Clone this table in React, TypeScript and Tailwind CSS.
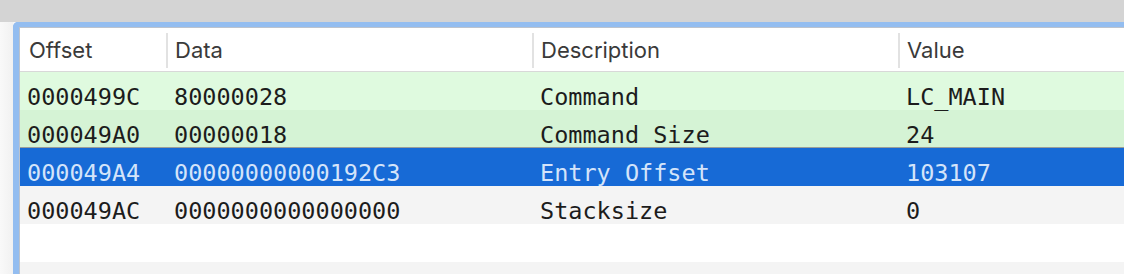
import React from "react";

type Row = { off: string; data: string; desc: string; val: string; bg: string; text: string; extra?: string };

const rows: Row[] = [
  { off: "0000499C", data: "80000028", desc: "Command", val: "LC_MAIN", bg: "bg-[#dffadf]", text: "text-[#1c1c1c]" },
  { off: "000049A0", data: "00000018", desc: "Command Size", val: "24", bg: "bg-[#d5f3d5]", text: "text-[#1c1c1c]", extra: "border-b border-[#9a9e9a]" },
  { off: "000049A4", data: "00000000000192C3", desc: "Entry Offset", val: "103107", bg: "bg-[#176ad6]", text: "text-[#d4e4fa]" },
  { off: "000049AC", data: "0000000000000000", desc: "Stacksize", val: "0", bg: "bg-[#f4f4f4]", text: "text-[#1c1c1c]" },
  { off: "", data: "", desc: "", val: "", bg: "bg-white", text: "text-[#1c1c1c]" },
  { off: "", data: "", desc: "", val: "", bg: "bg-[#f4f4f4]", text: "text-[#1c1c1c]" },
];

const grid = "grid grid-cols-[146px_366px_366px_1fr]";

function HeaderCell({ label, sep }: { label: string; sep: boolean }) {
  return (
    <div className="flex items-center h-full">
      {sep ? <div className="w-[2px] h-[35px] bg-[#e2e2e2] mt-[2px]" /> : null}
      <span className={sep ? "ml-[7px] pt-[2px]" : "ml-[9px] pt-[2px]"}>{label}</span>
    </div>
  );
}

export default function App() {
  return (
    <div className="w-[1124px] h-[274px] overflow-hidden bg-[#f6f6f6] flex flex-col">
      <div className="h-[22px] bg-[#d4d4d4] shrink-0" />
      <div className="flex flex-1 min-h-0">
        <div className="w-[13px] shrink-0 bg-gradient-to-r from-[#f9f9f9] to-[#f1f1f1]" />
        <div className="flex-1 min-w-0 border-l-[6px] border-t-[5px] border-[#93bdf0] rounded-tl-[5px] overflow-hidden">
          <div className="h-full border-l border-t border-[#bcc3cd] bg-white">
            <div
              className={`${grid} h-[44px] border-b border-[#d8d8d8] bg-white text-[22px] text-[#3a3a3a]`}
              style={{ fontFamily: "Inter, 'Noto Sans', sans-serif" }}
            >
              <HeaderCell label="Offset" sep={false} />
              <HeaderCell label="Data" sep={true} />
              <HeaderCell label="Description" sep={true} />
              <HeaderCell label="Value" sep={true} />
            </div>
            {rows.map((r, i) => (
              <div
                key={i}
                className={`${grid} h-[38px] ${r.bg} ${r.text} ${r.extra ?? ""} text-[23.5px] leading-[26px] whitespace-nowrap`}
                style={{ fontFamily: "'DejaVu Sans Mono', 'Liberation Mono', monospace" }}
              >
                <div className="pl-[7px] pt-[12px]">{r.off}</div>
                <div className="pl-[8px] pt-[12px]">{r.data}</div>
                <div className="pl-[8px] pt-[12px]">{r.desc}</div>
                <div className="pl-[8px] pt-[12px]">{r.val}</div>
              </div>
            ))}
          </div>
        </div>
      </div>
    </div>
  );
}
